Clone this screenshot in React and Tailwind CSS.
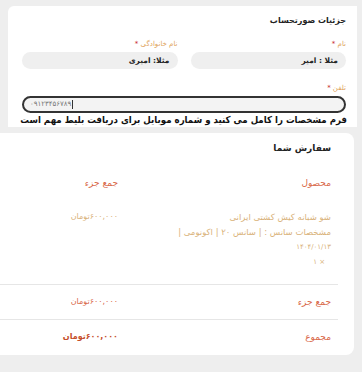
import React from 'react';

const font = { fontFamily: '"DejaVu Sans", "Noto Sans", sans-serif' };
const condensed = { fontFamily: '"DejaVu Sans Condensed", "DejaVu Sans", sans-serif', fontStretch: 'condensed' };

function Field({ label, placeholder }) {
  return (
    <div className="flex flex-col">
      <label className="h-[14px] text-[7px] leading-[14px] text-[#e0a45c]">
        {label} <span className="text-[#c62828]">*</span>
      </label>
      <div className="mt-px flex h-[17px] items-center rounded-full bg-[#efefef] px-[8px] text-[7.5px] font-bold text-[#222]">
        {placeholder}
      </div>
    </div>
  );
}

function Row({ right, left, bold = false, py = 'py-[11px]', leftSize = 'text-[8px]' }) {
  return (
    <div className={`flex items-center ${py} pr-[7px]`}>
      <span className="w-[213px] text-[9px] leading-[12px] text-[#d9694a]">{right}</span>
      <span className={`flex-1 ${leftSize} leading-[12px] ${bold ? 'font-bold text-[#c64f2c]' : 'text-[#d9694a]'}`}>
        {left}
      </span>
    </div>
  );
}

export default function App() {
  return (
    <div dir="rtl" style={font} className="h-[372px] w-[362px] overflow-hidden bg-[#eeeeee]">
      <div className="mt-[6px] mr-[5px] ml-[8px] rounded-tl-md bg-white pt-[8px] pr-[11px] pl-[14px]">
        <h2 className="h-[14px] text-[8px] font-bold leading-[14px] text-[#222]">جزئیات صورتحساب</h2>

        <div className="mt-[9px] grid grid-cols-2 gap-[13px]">
          <Field label="نام" placeholder="مثلا : امیر" />
          <Field label="نام خانوادگی" placeholder="مثلا: امیری" />
        </div>

        <label className="mt-[12px] block h-[14px] text-[7px] leading-[14px] text-[#e0a45c]">
          تلفن <span className="text-[#c62828]">*</span>
        </label>
        <div
          dir="ltr"
          className="mt-px flex h-[17px] items-center rounded-full border-2 border-[#333] bg-[#f3f3f3] px-[6px] text-[7px] text-[#777]"
        >
          ۰۹۱۲۳۴۵۶۷۸۹<span className="ml-px h-[9px] w-px bg-[#333]"></span>
        </div>
        <p
          style={condensed}
          className="-mr-[1px] -ml-[3px] h-[14px] text-[9.6px] leading-[14px] font-bold whitespace-nowrap text-[#111]"
        >
          فرم مشخصات را کامل می کنید و شماره موبایل برای دریافت بلیط مهم است
        </p>
      </div>

      <div className="mt-[6px] mr-[8px] h-[222px] rounded-r-lg bg-white pt-[6px] pr-[16px]">
        <h3 className="h-[18px] pr-[7px] text-[9px] leading-[18px] font-bold text-[#222]">سفارش شما</h3>

        <div className="mt-[10px]">
          <Row right="محصول" left="جمع جزء" py="py-[10px]" leftSize="text-[9px]" />

          <div className="flex items-start pt-[12px] pr-[7px] pb-[16px]">
            <div className="flex w-[213px] flex-col gap-[3px] text-[#d9b27a]">
              <span className="text-[8.5px] leading-[12px] whitespace-nowrap">شو شبانه کیش کشتی ایرانی</span>
              <span className="text-[8.5px] leading-[12px] whitespace-nowrap">مشخصات سانس : | سانس ۲۰ | اکونومی |</span>
              <span className="text-[7px] leading-[12px]">۱۴۰۴/۰۱/۱۳</span>
              <span className="mr-[6px] text-[7px] leading-[12px]">× ۱</span>
            </div>
            <span className="flex-1 text-[8px] leading-[12px] text-[#d9b27a]">۶۰۰,۰۰۰تومان</span>
          </div>

          <div className="border-t border-[#e6e6e6]"></div>
          <Row right="جمع جزء" left="۶۰۰,۰۰۰تومان" />
          <div className="border-t border-[#e6e6e6]"></div>
          <Row right="مجموع" left="۶۰۰,۰۰۰تومان" bold />
        </div>
      </div>
    </div>
  );
}
